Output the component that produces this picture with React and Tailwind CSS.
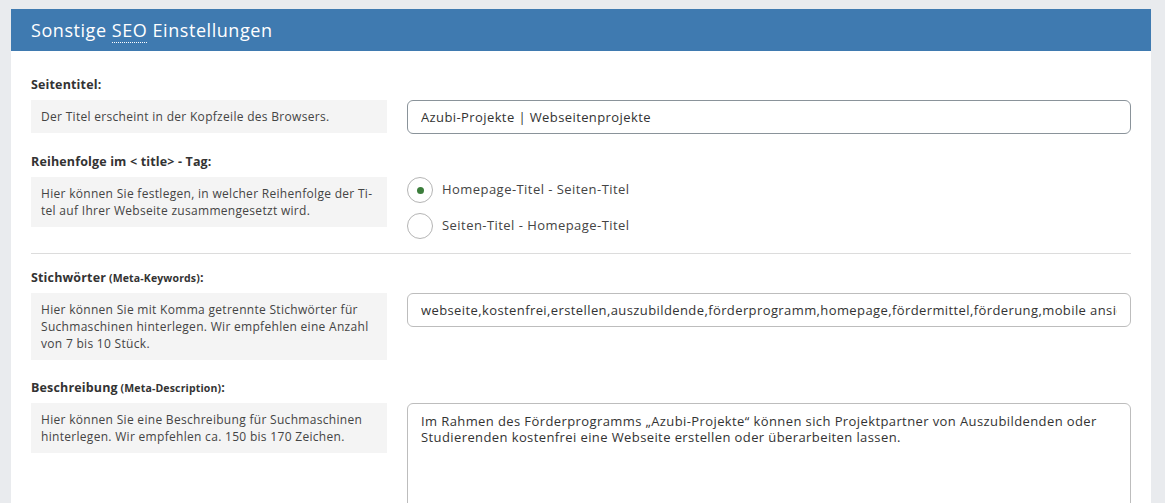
import { useState } from 'react';

const FONT = { fontFamily: '"Open Sans", "Noto Sans", Arial, sans-serif' };

function Label({ children, small }) {
  return (
    <div className="text-[12.5px] font-bold text-[#333] tracking-[0.15px] leading-[16px] mb-[7px]">
      {children}
      {small && <span className="text-[10.5px]"> ({small})</span>}
      {small && ':'}
    </div>
  );
}

function Hint({ children }) {
  return (
    <div className="bg-[#f4f4f4] px-[10px] py-[8px] text-[12px] tracking-[0.3px] leading-[17px] text-[#444] hyphens-manual">
      {children}
    </div>
  );
}

export default function App() {
  const [order, setOrder] = useState('homepage');
  const [title, setTitle] = useState('Azubi-Projekte | Webseitenprojekte');
  const [keywords, setKeywords] = useState('webseite,kostenfrei,erstellen,auszubildende,förderprogramm,homepage,fördermittel,förderung,mobile ansicht,responsive');
  const [desc, setDesc] = useState('Im Rahmen des Förderprogramms „Azubi-Projekte“ können sich Projektpartner von Auszubildenden oder Studierenden kostenfrei eine Webseite erstellen oder überarbeiten lassen.');

  return (
    <div className="h-[503px] overflow-hidden bg-[#e9ebee] pl-[11px] pr-[14px] pt-[9px]" style={FONT}>
      <div className="bg-white min-h-[494px]">
        <div className="bg-[#3f7ab0] h-[42px] px-[20px] flex items-center">
          <h2 className="text-[18px] text-white tracking-[0.55px]">
            Sonstige <abbr title="Search Engine Optimization" className="no-underline border-b border-dotted border-white">SEO</abbr> Einstellungen
          </h2>
        </div>

        <div className="px-[20px] pt-[26px]">
          {/* Seitentitel */}
          <Label>Seitentitel:</Label>
          <div className="flex gap-[20px]">
            <div className="w-[356px] shrink-0"><Hint>Der Titel erscheint in der Kopfzeile des Browsers.</Hint></div>
            <input
              value={title}
              onChange={(e) => setTitle(e.target.value)}
              className="flex-1 h-[34px] border border-[#8a939a] rounded-[6px] px-[13px] text-[13px] tracking-[0.4px] text-[#333] outline-none"
              style={FONT}
            />
          </div>

          {/* Reihenfolge */}
          <div className="mt-[20px]">
            <Label>Reihenfolge im &lt; title&gt; - Tag:</Label>
            <div className="flex gap-[20px]">
              <div className="w-[356px] shrink-0">
                <Hint>Hier können Sie festlegen, in welcher Reihenfolge der Ti&shy;tel auf Ihrer Webseite zusammengesetzt wird.</Hint>
              </div>
              <div className="flex flex-col gap-[10px]">
                {[['homepage', 'Homepage-Titel - Seiten-Titel'], ['seite', 'Seiten-Titel - Homepage-Titel']].map(([v, t]) => (
                  <label key={v} className="flex items-center gap-[9px] cursor-pointer text-[13px] tracking-[0.45px] text-[#444]" onClick={() => setOrder(v)}>
                    <span className="w-[26px] h-[26px] rounded-full border border-[#b5b5b5] flex items-center justify-center">
                      {order === v && <span className="w-[7px] h-[7px] rounded-full bg-[#3b7d3b]" />}
                    </span>
                    {t}
                  </label>
                ))}
              </div>
            </div>
          </div>

          <div className="border-t border-[#dcdcdc] mt-[14px]" />

          {/* Stichwörter */}
          <div className="mt-[16px]">
            <Label small="Meta-Keywords">Stichwörter</Label>
            <div className="flex gap-[20px]">
              <div className="w-[356px] shrink-0">
                <Hint>Hier können Sie mit Komma getrennte Stichwörter für Suchmaschinen hinterlegen. Wir empfehlen eine Anzahl von 7 bis 10 Stück.</Hint>
              </div>
              <input
                value={keywords}
                onChange={(e) => setKeywords(e.target.value)}
                className="flex-1 h-[34px] border border-[#bdbdbd] rounded-[6px] px-[13px] text-[13px] tracking-[0.4px] text-[#333] outline-none"
                style={FONT}
              />
            </div>
          </div>

          {/* Beschreibung */}
          <div className="mt-[20px]">
            <Label small="Meta-Description">Beschreibung</Label>
            <div className="flex gap-[20px]">
              <div className="w-[356px] shrink-0">
                <Hint>Hier können Sie eine Beschreibung für Suchmaschinen hinterlegen. Wir empfehlen ca. 150 bis 170 Zeichen.</Hint>
              </div>
              <textarea
                value={desc}
                onChange={(e) => setDesc(e.target.value)}
                className="flex-1 h-[130px] border border-[#bdbdbd] rounded-[6px] px-[13px] py-[9px] text-[13px] tracking-[0.4px] leading-[16px] text-[#333] outline-none resize-none"
                style={FONT}
              />
            </div>
          </div>
        </div>
      </div>
    </div>
  );
}
